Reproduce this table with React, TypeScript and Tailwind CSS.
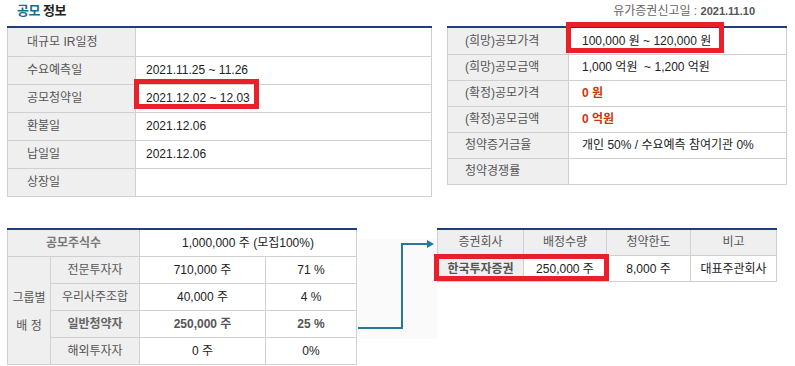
import React from "react";

const font = { fontFamily: '"Liberation Sans", "Noto Sans CJK KR", "Noto Sans", sans-serif' };

const lab = "bg-[#efefef] border border-[#d0d0d0] text-[#555] text-[12px] text-left";
const val = "bg-white border border-[#d0d0d0] text-[#222] text-[12px] text-left";

function TopLeft() {
  const rows: [string, string][] = [
    ["대규모 IR일정", ""],
    ["수요예측일", "2021.11.25 ~ 11.26"],
    ["공모청약일", "2021.12.02 ~ 12.03"],
    ["환불일", "2021.12.06"],
    ["납일일", "2021.12.06"],
    ["상장일", ""],
  ];
  return (
    <div className="w-[425px] border-t-2 border-[#233d7b]">
      <table className="w-full table-fixed border-collapse">
        <colgroup>
          <col className="w-[128px]" />
          <col />
        </colgroup>
        <tbody>
          {rows.map(([a, b], i) => (
            <tr key={i} className="h-[28px]">
              <td className={`${lab} font-normal pl-[19px] ${i === 0 ? "border-t-0" : ""}`}>{a}</td>
              <td className={`${val} pl-[10px] ${i === 0 ? "border-t-0" : ""}`}>{b}</td>
            </tr>
          ))}
        </tbody>
      </table>
    </div>
  );
}

function TopRight() {
  const rows: [string, React.ReactNode][] = [
    ["(희망)공모가격", "100,000 원 ~ 120,000 원"],
    ["(희망)공모금액", "1,000 억원  ~ 1,200 억원"],
    ["(확정)공모가격", <span className="text-[#c8380e] font-bold">0 원</span>],
    ["(확정)공모금액", <span className="text-[#c8380e] font-bold">0 억원</span>],
    ["청약증거금율", "개인 50% / 수요예측 참여기관 0%"],
    ["청약경쟁률", ""],
  ];
  return (
    <div className="w-[340px] border-t-2 border-[#233d7b]">
      <table className="w-full table-fixed border-collapse">
        <colgroup>
          <col className="w-[121px]" />
          <col />
        </colgroup>
        <tbody>
          {rows.map(([a, b], i) => (
            <tr key={i} className="h-[26px]">
              <td className={`${lab} font-normal pl-[17px] ${i === 0 ? "border-t-0" : ""}`}>{a}</td>
              <td className={`${val} pl-[13px] whitespace-pre ${i === 0 ? "border-t-0" : ""}`}>{b}</td>
            </tr>
          ))}
        </tbody>
      </table>
    </div>
  );
}

const cLab = "bg-[#efefef] border border-[#d0d0d0] text-[12px] text-center";
const cVal = "bg-white border border-[#d0d0d0] text-[12px] text-center";

function BottomLeft() {
  const rows: [string, string, string, boolean][] = [
    ["전문투자자", "710,000 주", "71 %", false],
    ["우리사주조합", "40,000 주", "4 %", false],
    ["일반청약자", "250,000 주", "25 %", true],
    ["해외투자자", "0 주", "0%", false],
  ];
  return (
    <div className="w-[350px] border-t-2 border-[#233d7b] self-start">
      <table className="w-full table-fixed border-collapse">
        <colgroup>
          <col className="w-[43px]" />
          <col className="w-[89px]" />
          <col className="w-[126px]" />
          <col />
        </colgroup>
        <tbody>
          <tr className="h-[27px]">
            <td colSpan={2} className={`${cLab} border-t-0 font-bold text-[#777]`}>공모주식수</td>
            <td colSpan={2} className={`${cVal} border-t-0 font-normal text-[#222]`}>1,000,000 주 (모집100%)</td>
          </tr>
          {rows.map(([a, b, c, bd], i) => (
            <tr key={i} className="h-[27px]">
              {i === 0 && (
                <td rowSpan={4} className={`${cLab} font-normal text-[#555] leading-[28px] pt-[2px]`}>
                  그룹별
                  <br />배 정
                </td>
              )}
              <td className={`${cLab} ${bd ? "font-bold text-[#666]" : "font-normal text-[#555]"}`}>{a}</td>
              <td className={`${cVal} ${bd ? "font-bold text-[#555]" : "font-normal text-[#222]"}`}>{b}</td>
              <td className={`${cVal} ${bd ? "font-bold text-[#555]" : "font-normal text-[#222]"}`}>{c}</td>
            </tr>
          ))}
        </tbody>
      </table>
    </div>
  );
}

function BottomRight() {
  return (
    <div className="w-[340px] border-t-2 border-[#233d7b] self-start">
      <table className="w-full table-fixed border-collapse">
        <colgroup>
          <col className="w-[86px]" />
          <col className="w-[83px]" />
          <col className="w-[84px]" />
          <col />
        </colgroup>
        <tbody>
          <tr className="h-[26px]">
            {["증권회사", "배정수량", "청약한도", "비고"].map((h) => (
              <td key={h} className={`${cLab} border-t-0 font-normal text-[#555]`}>{h}</td>
            ))}
          </tr>
          <tr className="h-[26px]">
            <td className={`${cLab} font-bold text-[#555]`}>한국투자증권</td>
            <td className={`${cVal} font-normal text-[#222]`}>250,000 주</td>
            <td className={`${cVal} font-normal text-[#222]`}>8,000 주</td>
            <td className={`${cVal} font-normal text-[#222]`}>대표주관회사</td>
          </tr>
        </tbody>
      </table>
    </div>
  );
}

function Arrow() {
  return (
    <svg width="80" height="137" viewBox="0 0 80 137" className="shrink-0">
      <rect x="1" y="11" width="79" height="100" fill="#fafafa" />
      <path d="M1 100 H45 V16 H72" fill="none" stroke="#267a93" strokeWidth="2" />
      <polygon points="70,12 77,16 70,20" fill="#267a93" />
    </svg>
  );
}

export default function App() {
  return (
    <div className="relative w-[795px] h-[366px] bg-white overflow-hidden" style={font}>
      <div className="flex items-center justify-between h-[26px] pl-[17px] pr-[40px] pb-[4px]">
        <div className="text-[13px] font-bold tracking-[-0.5px]">
          <span className="text-[#176d8c]">공모</span> <span className="text-[#222]">정보</span>
        </div>
        <div className="text-[12px] text-[#666]">
          유가증권신고일 : <span className="font-bold text-[#555] text-[11px]">2021.11.10</span>
        </div>
      </div>
      <div className="flex pl-[7px] gap-[15px] items-start">
        <TopLeft />
        <TopRight />
      </div>
      <div className="flex pl-[7px] mt-[31px]">
        <BottomLeft />
        <Arrow />
        <BottomRight />
      </div>

      <div className="absolute left-[134px] top-[79px] w-[125px] h-[30px] border-[5px] border-[#e8202a]" />
      <div className="absolute left-[566px] top-[22px] w-[158px] h-[31px] border-[5px] border-[#e8202a]" />
      <div className="absolute left-[434px] top-[254px] w-[175px] h-[27px] border-[5px] border-[#e8202a]" />
    </div>
  );
}
